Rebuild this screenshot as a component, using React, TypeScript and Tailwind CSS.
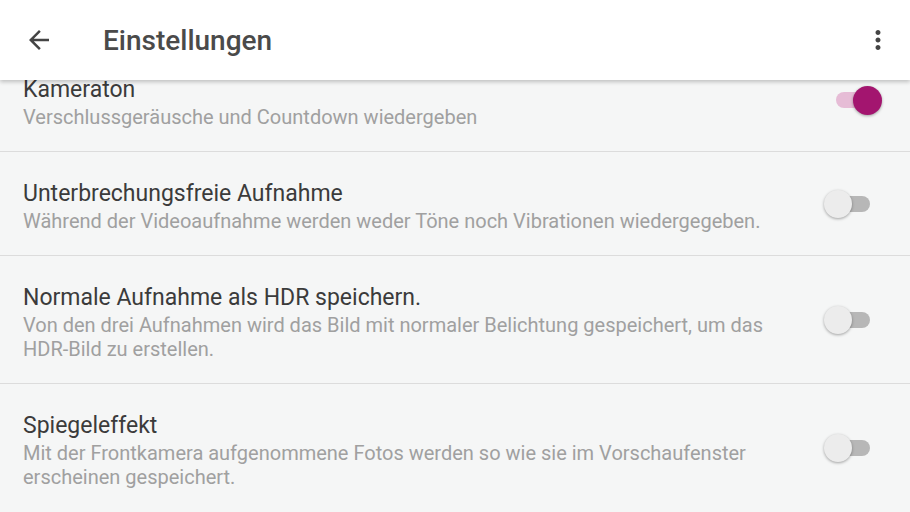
import type { ReactNode } from "react"

type Setting = {
  title: string
  summary: ReactNode
  on: boolean
  tall?: boolean
}

const settings: Setting[] = [
  {
    title: "Kameraton",
    summary: "Verschlussgeräusche und Countdown wiedergeben",
    on: true,
  },
  {
    title: "Unterbrechungsfreie Aufnahme",
    summary:
      "Während der Videoaufnahme werden weder Töne noch Vibrationen wiedergegeben.",
    on: false,
  },
  {
    title: "Normale Aufnahme als HDR speichern.",
    summary: (
      <>
        Von den drei Aufnahmen wird das Bild mit normaler Belichtung gespeichert, um das
        <br />
        HDR-Bild zu erstellen.
      </>
    ),
    on: false,
    tall: true,
  },
  {
    title: "Spiegeleffekt",
    summary: (
      <>
        Mit der Frontkamera aufgenommene Fotos werden so wie sie im Vorschaufenster
        <br />
        erscheinen gespeichert.
      </>
    ),
    on: false,
    tall: true,
  },
]

function Toggle({ on }: { on: boolean }) {
  if (on) {
    // the checked one sits a bit further right, as in the screenshot
    return (
      <div className="relative -mr-[10px] flex h-[30px] w-[48px] items-center">
        <div className="ml-[2px] h-[16px] w-[40px] rounded-full bg-[#e6bcd6]" />
        <div className="absolute right-0 top-[1px] h-[29px] w-[29px] rounded-full bg-[#a3156f] shadow-[0_1px_3px_rgba(0,0,0,0.35)]" />
      </div>
    )
  }
  return (
    <div className="relative flex h-[30px] w-[48px] items-center">
      <div className="ml-[6px] h-[16px] w-[40px] rounded-full bg-[#b7b7b7]" />
      <div className="absolute left-0 top-[1px] h-[28px] w-[28px] rounded-full bg-[#ececec] shadow-[0_1px_3px_rgba(0,0,0,0.35)]" />
    </div>
  )
}

function Row({ s, last }: { s: Setting; last: boolean }) {
  return (
    <div
      className={`flex items-center justify-between pl-[23px] pr-[38px] ${
        s.tall ? "h-[128px]" : "h-[104px]"
      } ${last ? "" : "border-b border-[#dcdcdc]"}`}
    >
      <div className="self-start pt-[27px]">
        <div className="text-[23px] leading-[30px] text-[#3b3b3b]">{s.title}</div>
        <div className="text-[20px] leading-[24px] text-[#a0a0a0]">{s.summary}</div>
      </div>
      <Toggle on={s.on} />
    </div>
  )
}

export default function App() {
  return (
    <div
      className="flex h-[512px] w-[910px] flex-col overflow-hidden bg-[#f5f6f6]"
      style={{ fontFamily: "Roboto, 'Noto Sans', sans-serif" }}
    >
      <header className="relative z-10 flex h-[80px] shrink-0 items-center bg-white shadow-[0_2px_4px_rgba(0,0,0,0.22)]">
        <svg viewBox="0 0 24 24" className="ml-[24px] h-[30px] w-[30px] fill-[#444]">
          <path d="M20 11H7.83l5.59-5.59L12 4l-8 8 8 8 1.41-1.41L7.83 13H20v-2z" />
        </svg>
        <h1 className="ml-[49px] mt-[2px] text-[28px] font-medium text-[#4a4a4a]">Einstellungen</h1>
        <svg viewBox="0 0 24 24" className="ml-auto mr-[17px] h-[30px] w-[30px] fill-[#444]">
          <path d="M12 8c1.1 0 2-.9 2-2s-.9-2-2-2-2 .9-2 2 .9 2 2 2zm0 2c-1.1 0-2 .9-2 2s.9 2 2 2 2-.9 2-2-.9-2-2-2zm0 6c-1.1 0-2 .9-2 2s.9 2 2 2 2-.9 2-2-.9-2-2-2z" />
        </svg>
      </header>
      <div className="-mt-[32px]">
        {settings.map((s, i) => (
          <Row key={s.title} s={s} last={i === settings.length - 1} />
        ))}
      </div>
    </div>
  )
}
